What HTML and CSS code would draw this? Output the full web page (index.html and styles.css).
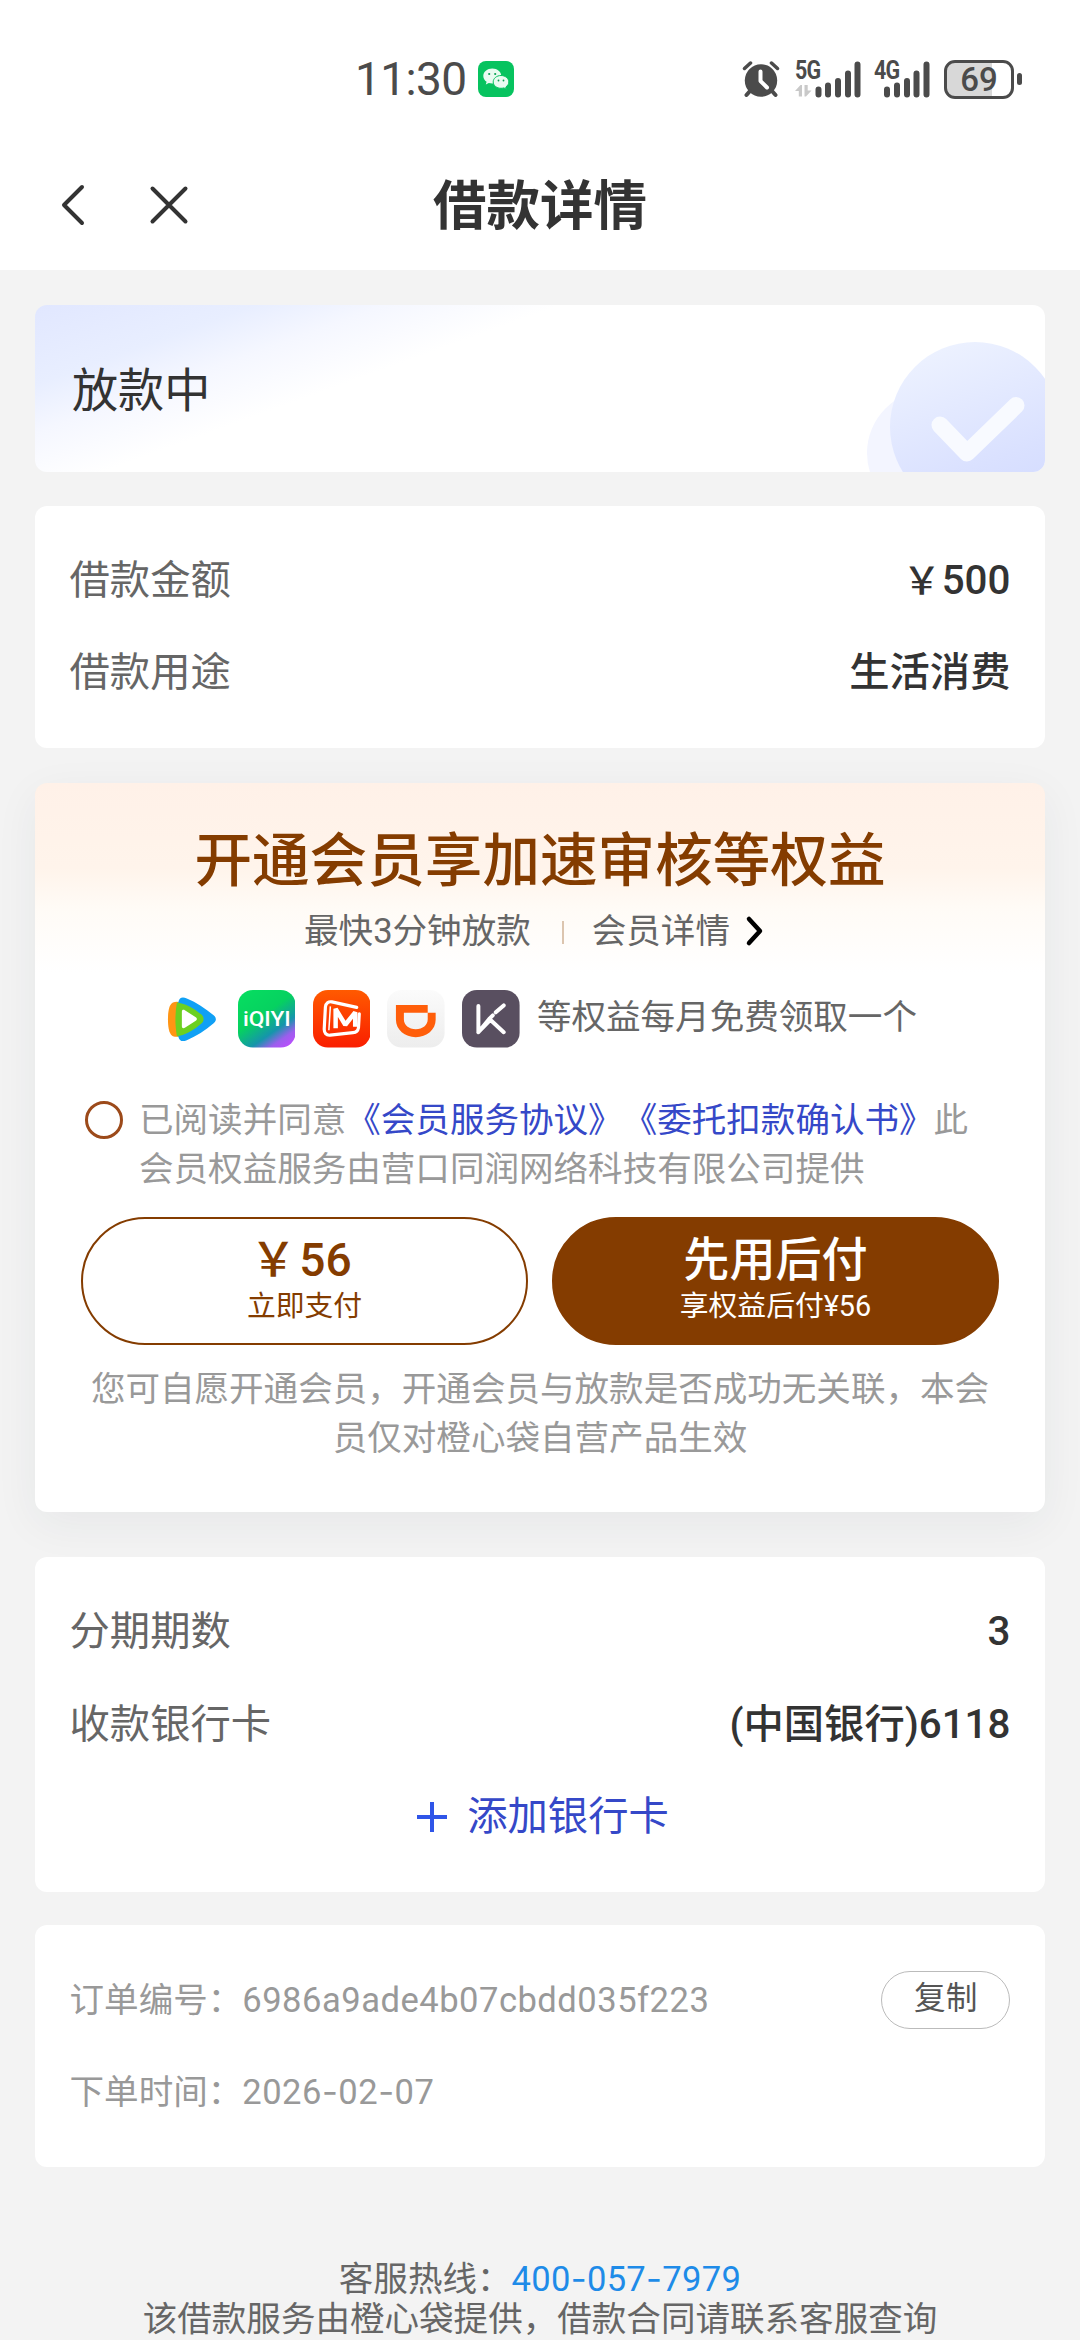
FILE: index.html
```html
<!DOCTYPE html>
<html lang="zh-CN">
<head>
<meta charset="utf-8">
<title>借款详情</title>
<link rel="stylesheet" href="styles.css">
</head>
<body>
<div class="page">
  <header class="status">
    <div class="status-left">
      <span class="clock">11:30</span>
      <svg class="wechat" viewBox="0 0 36 36">
        <rect width="36" height="36" rx="8" fill="#07c35f"/>
        <path d="M14.300 7.500c-5 0-9 3.300-9 7.500 0 2.400 1.300 4.400 3.300 5.800l-.8 2.600 3-1.500c1.100.3 2.300.5 3.500.5 5 0 9-3.300 9-7.400s-4-7.500-9-7.500z" fill="#e9fbf1"/>
        <path d="M23 14.500c-4.300 0-7.800 2.900-7.800 6.400s3.500 6.400 7.800 6.400c1 0 2-.2 2.900-.4l2.500 1.300-.6-2.200c1.800-1.200 3-3 3-5.100 0-3.500-3.500-6.400-7.800-6.400z" fill="#e9fbf1" stroke="#07c35f" stroke-width="1"/>
        <circle cx="11.200" cy="13" r="1.100" fill="#07a050"/><circle cx="17.200" cy="13" r="1.100" fill="#07a050"/>
        <circle cx="20.500" cy="19.500" r=".9" fill="#07a050"/><circle cx="25.500" cy="19.500" r=".9" fill="#07a050"/>
      </svg>
    </div>
    <div class="status-right">
      <svg class="alarm" viewBox="0 0 38 38">
        <circle cx="19" cy="20.500" r="16.200" fill="#4b4b4b"/>
        <path d="M2.500 8.500l6-5.500M35.500 8.500l-6-5.500" stroke="#4b4b4b" stroke-width="3.500" stroke-linecap="round"/>
        <path d="M8 31l-3.500 4M30 31l3.500 4" stroke="#4b4b4b" stroke-width="4" stroke-linecap="round"/>
        <path d="M18.500 11.500v9.500l6.500 6.500" fill="none" stroke="#fff" stroke-width="4" stroke-linecap="round" stroke-linejoin="round"/>
      </svg>
      <div class="signal signal-5g">
        <span class="net">5G</span>
        <svg class="bars" viewBox="0 0 66 38">
          <path d="M23.500 34.500v-5M33 34.500v-9M43 34.500v-13.500M53 34.500v-21M62.500 34.500v-30" stroke="#4b4b4b" stroke-width="6" stroke-linecap="round"/>
          <path d="M0 31l5.500-6H7v11.500H3.800V31zM16.500 30.500l-5.500 6H9.500V25h3.200v5.500z" fill="#c9c9c9"/>
        </svg>
      </div>
      <div class="signal signal-4g">
        <span class="net">4G</span>
        <svg class="bars" viewBox="0 0 56 38">
          <path d="M13 34.500v-5M23 34.500v-9M33 34.500v-13.500M42.500 34.500v-21M52.500 34.500v-30" stroke="#4b4b4b" stroke-width="6" stroke-linecap="round"/>
        </svg>
      </div>
      <div class="battery"><span>69</span></div>
      <i class="battery-cap"></i>
    </div>
  </header>

  <nav class="nav">
    <div class="nav-actions">
      <svg class="back" viewBox="0 0 26 44"><path d="M22 4L4 22l18 18" /></svg>
      <svg class="close" viewBox="0 0 42 42"><path d="M4.500 4.500l33 33M37.500 4.500l-33 33" /></svg>
    </div>
    <h1>借款详情</h1>
  </nav>

  <main>
    <section class="card banner">
      <span>放款中</span>
      <svg class="banner-art" viewBox="0 0 180 167">
        <defs>
          <linearGradient id="disc" x1=".3" y1="0" x2=".7" y2="1">
            <stop offset="0" stop-color="#edf2ff"/><stop offset=".7" stop-color="#dae1ff"/><stop offset="1" stop-color="#d3dbff"/>
          </linearGradient>
        </defs>
        <circle cx="65" cy="148" r="63" fill="#f3f5ff"/>
        <circle cx="110" cy="122" r="85" fill="url(#disc)"/>
        <path d="M75 120l27 28 49-47.500" fill="none" stroke="#f8faff" stroke-width="17" stroke-linecap="round" stroke-linejoin="round"/>
      </svg>
    </section>

    <section class="card list">
      <div class="row"><span>借款金额</span><b><span class="yen">￥</span>500</b></div>
      <div class="row"><span>借款用途</span><b>生活消费</b></div>
    </section>

    <section class="card member">
      <h2>开通会员享加速审核等权益</h2>
      <div class="member-sub">
        <span>最快3分钟放款</span>
        <i class="divider"></i>
        <span>会员详情</span>
        <svg class="chevron" viewBox="0 0 20 32"><path d="M4 4l11 12L4 28"/></svg>
      </div>
      <div class="benefits">
        <svg class="app" viewBox="0 0 58 58">
          <path d="M10 12.500c4-1.500 8-.5 12 2v30c-4 2.500-8 3.500-12 2-3-1.500-5-6-5-17s2-15.500 5-17z" fill="#ff9514"/>
          <path d="M15.500 12c1-4.500 4-5.500 8.500-3.500 10 4 18 9.500 27 17 3 2.500 3 5.500 0 8-9 7.500-17 13-27 17-4.500 2-7.500 1-8.500-3.500-2.500-11-2.500-24 0-35z" fill="#10a0f5"/>
          <path d="M14 12.500c7 .5 17 5.500 25 12.500 2.500 2.500 2.500 6 0 8.500-8 7-18 12.500-25 13-2-11-2-23 0-34z" fill="#6cd021"/>
          <path d="M19 22c0-2 1.500-2.500 3-1.500l11 7c1.500 1 1.500 2.500 0 3.500l-11 7c-1.500 1-3 .5-3-1.500z" fill="#fff"/>
        </svg>
        <svg class="app" viewBox="0 0 58 58">
          <defs><linearGradient id="iq" x1=".2" y1="0" x2=".9" y2="1">
            <stop offset="0" stop-color="#06dc60"/><stop offset=".4" stop-color="#06d160"/><stop offset=".68" stop-color="#1595ab"/><stop offset=".84" stop-color="#9c5eed"/><stop offset="1" stop-color="#c04cff"/>
          </linearGradient></defs>
          <rect width="58" height="58" rx="15" fill="url(#iq)"/>
          <text x="29" y="36.500" text-anchor="middle" textLength="48" lengthAdjust="spacingAndGlyphs" class="iq-text">iQIYI</text>
        </svg>
        <svg class="app" viewBox="0 0 58 58">
          <defs><linearGradient id="mg" x1="0" y1="0" x2="0" y2="1">
            <stop offset="0" stop-color="#ff5a00"/><stop offset="1" stop-color="#fa1e00"/>
          </linearGradient></defs>
          <rect width="58" height="58" rx="15" fill="url(#mg)"/>
          <path d="M44 17.500L19 12c-3.500-.7-6 1.500-6.500 5l-1.200 22c-.2 4 2 7 6 6.500l23-2.500c3-.3 5-2 5.500-5l.8-14" fill="none" stroke="#fff" stroke-width="3.200" stroke-linecap="round"/>
          <path d="M17.500 16.500l-1.500 24" stroke="#fff" stroke-width="1.500"/>
          <path d="M22.800 38.500V19l9.700 16L42.500 22.500V37" fill="none" stroke="#fff" stroke-width="4.500" stroke-linejoin="bevel"/>
        </svg>
        <svg class="app" viewBox="0 0 58 58">
          <defs><linearGradient id="dd" x1="0" y1="0" x2="0" y2="1">
            <stop offset="0" stop-color="#fbfbfb"/><stop offset="1" stop-color="#ededed"/>
          </linearGradient></defs>
          <rect width="58" height="58" rx="15" fill="url(#dd)"/>
          <path d="M9 15h32v8h8v7c0 10-9 17.500-20 17.500S9 40 9 30zM17 23v6.500c0 6 5 10 12 10s12-4 12-10V23z" fill="#ff5e0a" fill-rule="evenodd"/>
        </svg>
        <svg class="app" viewBox="0 0 58 58">
          <rect width="58" height="58" rx="15" fill="#594f60"/>
          <path d="M16.500 16v26.500L28 28.500l3-3M34 22.500l8-7M16.500 42.500l12-12.500 13.500 12.500" fill="none" stroke="#fff" stroke-width="4" stroke-linecap="round" stroke-linejoin="round"/>
        </svg>
        <span>等权益每月免费领取一个</span>
      </div>
      <div class="agree">
        <i class="radio"></i>
        <p>已阅读并同意<a>《会员服务协议》</a><a>《委托扣款确认书》</a>此会员权益服务由营口同润网络科技有限公司提供</p>
      </div>
      <div class="pay">
        <div class="btn outline"><b><span class="yen">￥</span>56</b><small>立即支付</small></div>
        <div class="btn solid"><b>先用后付</b><small>享权益后付¥56</small></div>
      </div>
      <p class="note">您可自愿开通会员，开通会员与放款是否成功无关联，本会员仅对橙心袋自营产品生效</p>
    </section>

    <section class="card list installment">
      <div class="row"><span>分期期数</span><b>3</b></div>
      <div class="row"><span>收款银行卡</span><b>(中国银行)6118</b></div>
      <div class="row add">
        <svg class="plus" viewBox="0 0 30 32"><path d="M15 1v30M0 16h30"/></svg>
        <span>添加银行卡</span>
      </div>
    </section>

    <section class="card list order">
      <div class="row"><span>订单编号：<span class="code">6986a9ade4b07cbdd035f223</span></span><span class="copy">复制</span></div>
      <div class="row"><span>下单时间：<span class="code">2026<i class="dash">-</i>02<i class="dash">-</i>07</span></span></div>
    </section>
  </main>

  <footer>
    <p>客服热线：<a class="phone">400<i class="dash">-</i>057<i class="dash">-</i>7979</a></p>
    <p>该借款服务由橙心袋提供，借款合同请联系客服查询</p>
  </footer>
</div>
</body>
</html>
```
FILE: styles.css
```css
* { box-sizing: border-box; }
html, body { margin: 0; padding: 0; }
body {
  background: #f3f3f3;
  font-family: Roboto, "Noto Sans CJK SC", sans-serif;
  text-spacing-trim: space-all;
  color: #333;
}
h1, h2, p { margin: 0; }
i { font-style: normal; }
b { font-weight: 500; }
svg { display: block; flex: none; }
.page { width: 1080px; height: 2340px; overflow: hidden; display: flex; flex-direction: column; }

.status {
  height: 138px; padding: 20px 58px 0 355px; background: #fff; color: #4b4b4b;
  display: flex; align-items: center; justify-content: space-between; flex: none;
}
.status-left { display: flex; align-items: center; gap: 12px; }
.clock { width: 111px; font-size: 46px; line-height: 50px; letter-spacing: -0.6px; white-space: nowrap; }
.wechat { width: 36px; height: 36px; }
.status-right { display: flex; align-items: center; }
.alarm { width: 38px; height: 38px; margin-right: 15px; }
.signal { display: grid; height: 38px; }
.signal > * { grid-area: 1 / 1; }
.signal-5g { width: 66px; margin-right: 13px; }
.signal-4g { width: 56px; margin-right: 14px; }
.net { font-size: 25.500px; line-height: 20px; font-weight: 700; letter-spacing: -1px; transform: scaleX(.84); transform-origin: left; justify-self: start; align-self: start; }
.bars { height: 38px; }
.battery {
  width: 70px; height: 39px; border: 3px solid #4b4b4b; border-radius: 11px;
  background: linear-gradient(90deg, #d8d8d8 0 45px, #fff 45px);
  font-size: 33px; line-height: 34px; font-weight: 500; text-align: center;
}
.battery-cap { width: 5px; height: 12px; margin-left: 3px; border-radius: 3px; background: #4b4b4b; }

.nav {
  height: 132px; padding: 1px 60px 0; background: #fff; flex: none;
  display: grid; grid-template-columns: 1fr auto 1fr; align-items: center;
}
.nav-actions { display: flex; align-items: center; gap: 62px; }
.nav svg path { fill: none; stroke: #333; stroke-width: 4; stroke-linecap: round; stroke-linejoin: round; }
.back { width: 26px; height: 44px; }
.close { width: 42px; height: 42px; }
h1 { padding-top: 4px; font-size: 53.5px; line-height: 64px; font-weight: 700; }

main { padding: 34.5px 35px 0; display: flex; flex-direction: column; gap: 33.700px; flex: none; }
.card { background: #fff; border-radius: 12px; }

.banner {
  height: 167.500px; padding-left: 37px; overflow: hidden;
  display: flex; align-items: center; justify-content: space-between;
  background: linear-gradient(160deg, #e1e7ff 0, #e8eeff 75px, #f5f7ff 120px, #fff 180px);
  font-size: 46.080px; line-height: 60px;
}
.banner > span { padding-top: 5px; }
.banner-art { width: 180px; height: 167px; }

.list { padding: 28.800px 34.560px; }
.row {
  height: 92.160px; display: flex; align-items: center; justify-content: space-between;
  font-size: 40.320px; line-height: 56px; color: #666;
}
.row b { color: #333; }

.member {
  height: 729px; margin-top: 2px; padding: 43px 46px 0;
  display: flex; flex-direction: column; align-items: center;
  background: #fff linear-gradient(180deg, #fff1e8 0, #fff4eb 85px, #fffbf6 125px, #fff 190px) no-repeat;
  box-shadow: 0 12px 45px rgba(40, 50, 60, .06);
}
h2 { font-size: 57.600px; line-height: 72px; font-weight: 500; color: #843c00; white-space: nowrap; }
.member-sub {
  margin-top: 9px; padding-right: 11px; height: 48px; display: flex; align-items: center;
  font-size: 34.560px; line-height: 48px; color: #666;
}
.divider { width: 2px; height: 23px; margin: 2px 28px 0 31px; background: #dcc5af; }
.chevron { width: 20px; height: 32px; margin-left: 15px; }
.chevron path { fill: none; stroke: #000; stroke-width: 4.500; stroke-linecap: round; stroke-linejoin: round; }
.benefits {
  margin-top: 35px; height: 58px; display: flex; align-items: center; gap: 17.200px;
  font-size: 34.560px; line-height: 48px; color: #666; white-space: nowrap;
}
.benefits span { padding-bottom: 4px; }
.app { width: 57.600px; height: 57.600px; }
.iq-text { font: 500 20px Roboto, sans-serif; fill: #fff; }
.agree { align-self: stretch; margin-top: 48px; padding: 0 15px 0 4px; display: flex; gap: 16px; }
.radio { width: 38px; height: 38px; margin-top: 5px; border: 3px solid #9c4a1a; border-radius: 50%; flex: none; }
.agree p { font-size: 34.560px; line-height: 49px; color: #999; flex: 1; }
.agree a { color: #3548c8; }
.pay { align-self: stretch; margin-top: 23px; display: flex; gap: 24px; }
.btn {
  flex: 1; height: 128px; border-radius: 64px; border: 2.500px solid #843c00; color: #843c00;
  display: flex; flex-direction: column; align-items: center; justify-content: center; padding-bottom: 1px;
}
.btn b { font-size: 46.080px; line-height: 52px; }
.btn small { font-size: 28.800px; line-height: 41px; }
.outline b { padding-right: 7px; }
.yen { margin-right: 1px; }
.outline .yen { margin-right: 3px; }
.row .yen { font-size: 38px; }
.solid { background: #843c00; color: #fff; }
.note { align-self: stretch; margin-top: 20px; font-size: 34.560px; line-height: 49px; color: #999; text-align: center; }

.installment { margin-top: 11.500px; }
.add { justify-content: center; gap: 20px; padding-left: 6px; color: #3548c8; }
.plus { width: 30px; height: 32px; }
.plus path { stroke: #2f55e8; stroke-width: 4; }
.order .row { font-size: 34.560px; color: #999; }
.copy {
  width: 129.600px; height: 57.600px; border: 1.500px solid #bbb; border-radius: 29px;
  display: flex; align-items: center; justify-content: center; padding-bottom: 3px;
  font-size: 31.680px; line-height: 50px; color: #555;
}
.code { letter-spacing: .5px; }
.phone { letter-spacing: .3px; }
.dash { font-family: Inter, sans-serif; }
footer { margin-top: 92px; text-align: center; font-size: 34.560px; line-height: 40px; color: #666; }
footer a { color: #1e8be8; }
```
